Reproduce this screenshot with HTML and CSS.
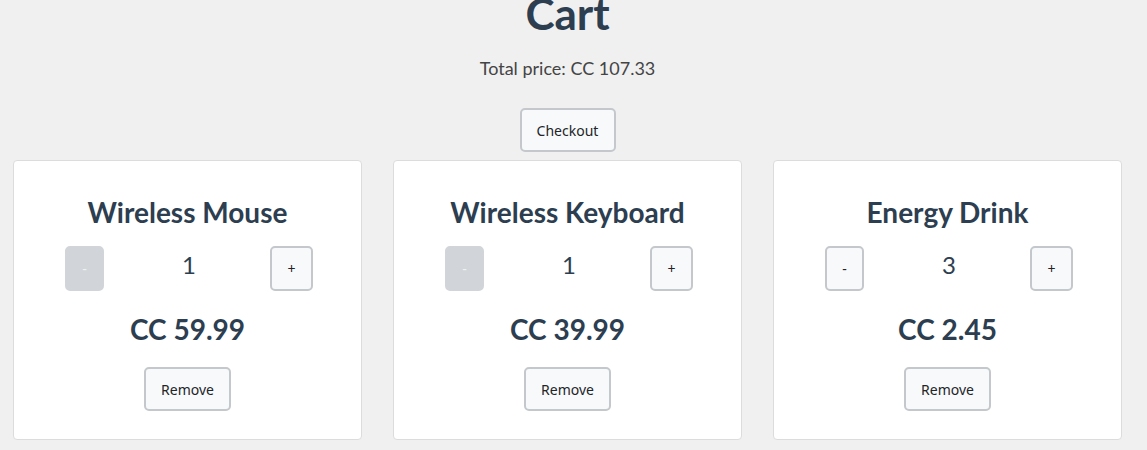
FILE: index.html
```html
<!DOCTYPE html>
<html>
<head>
<meta charset="utf-8">
<link rel="stylesheet" href="styles.css">
</head>
<body>
<div class="page">
  <div class="top">
    <h1 class="title">Cart</h1>
    <p class="total">Total price: CC 107.33</p>
    <button class="btn checkout">Checkout</button>
  </div>
  <div class="cards">
    <div class="card">
      <h3 class="name">Wireless Mouse</h3>
      <div class="qty">
        <button class="btn step minus" disabled>-</button>
        <span class="count">1</span>
        <button class="btn step plus">+</button>
      </div>
      <h3 class="price">CC 59.99</h3>
      <button class="btn remove">Remove</button>
    </div>
    <div class="card">
      <h3 class="name">Wireless Keyboard</h3>
      <div class="qty">
        <button class="btn step minus" disabled>-</button>
        <span class="count">1</span>
        <button class="btn step plus">+</button>
      </div>
      <h3 class="price">CC 39.99</h3>
      <button class="btn remove">Remove</button>
    </div>
    <div class="card">
      <h3 class="name">Energy Drink</h3>
      <div class="qty">
        <button class="btn step minus">-</button>
        <span class="count">3</span>
        <button class="btn step plus">+</button>
      </div>
      <h3 class="price">CC 2.45</h3>
      <button class="btn remove">Remove</button>
    </div>
  </div>
</div>
</body>
</html>
```
FILE: styles.css
```css
html, body {
  margin: 0;
  padding: 0;
}
body {
  background: #f0f0f0;
  font-family: Lato, "Noto Sans", sans-serif;
  color: #2c3e50;
  width: 1147px;
  height: 450px;
  overflow: hidden;
}
.page {
  width: 1109px;
  margin-left: 13px;
}
.top {
  display: flex;
  flex-direction: column;
  align-items: center;
}
.title {
  margin: -13px 0 0;
  font-size: 44px;
  font-weight: 700;
  line-height: 53px;
}
.total {
  margin: 17px 0 0;
  font-size: 18px;
  line-height: 22px;
  color: #444;
}
.btn {
  font-family: "Noto Sans", "Open Sans", sans-serif;
  font-size: 14px;
  color: #212529;
  background: #f8f9fa;
  border: 2px solid #c4c8cc;
  border-radius: 5px;
  padding: 0;
  display: flex;
  align-items: center;
  justify-content: center;
  box-sizing: border-box;
}
.checkout {
  margin-top: 29px;
  width: 96px;
  height: 44px;
}
.cards {
  display: grid;
  grid-template-columns: repeat(3, 349px);
  column-gap: 31px;
  margin-top: 8px;
}
.card {
  background: #fff;
  border: 1px solid #dcdcdc;
  border-radius: 4px;
  height: 280px;
  box-sizing: border-box;
  display: flex;
  flex-direction: column;
  align-items: center;
}
.name {
  margin: 34px 0 0;
  font-size: 28px;
  font-weight: 700;
  line-height: 34px;
}
.qty {
  margin: 17px 0 0 3px;
  width: 248px;
  display: flex;
  align-items: center;
  justify-content: space-between;
}
.step {
  height: 45px;
}
.minus {
  width: 39px;
}
.plus {
  width: 43px;
}
.minus:disabled {
  background: #d1d5d9;
  border-color: #d1d5d9;
  color: #eef0f2;
}
.count {
  font-size: 24px;
  line-height: 30px;
  color: #2c3e50;
  margin: 0 0 8px 4px;
}
.price {
  margin: 21px 0 0;
  font-size: 28px;
  font-weight: 700;
  line-height: 34px;
}
.remove {
  margin-top: 21px;
  width: 87px;
  height: 44px;
}
```
